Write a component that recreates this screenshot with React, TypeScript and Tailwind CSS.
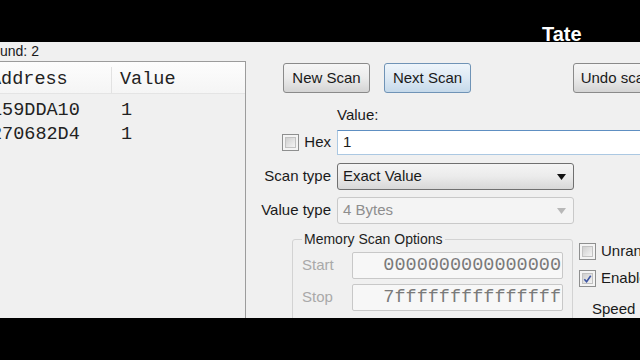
import React from "react";

const MONO = "font-['Liberation_Mono','Courier_New',monospace]";

function Btn({ children, blue, className = "" }: { children: React.ReactNode; blue?: boolean; className?: string }) {
  return (
    <div
      className={`flex h-[30px] w-[87px] shrink-0 items-center justify-center whitespace-nowrap rounded-[3px] border bg-linear-to-b ${
        blue
          ? "border-[#6f93b6] from-[#eef5fb] via-[#dde9f4] to-[#c5d9ea]"
          : "border-[#8a8a8a] from-[#f6f6f6] via-[#ebebeb] to-[#d4d4d4]"
      } ${className}`}
    >
      {children}
    </div>
  );
}

function Check({ checked }: { checked?: boolean }) {
  return (
    <span className="flex h-[17px] w-[17px] shrink-0 border border-[#8e8f8f] bg-[#f4f4f4] p-[2px]">
      <span className="flex h-full w-full items-center justify-center border border-[#c2c2c2] bg-linear-to-br from-[#cfcfcf] to-[#f4f4f4]">
        {checked && (
          <svg width="10" height="10" viewBox="0 0 10 10">
            <path d="M1.5 5.2 L4 8 L8.6 1.4" fill="none" stroke="#3d55a3" strokeWidth="1.8" />
          </svg>
        )}
      </span>
    </span>
  );
}

function Arrow({ color }: { color: string }) {
  return (
    <svg width="9" height="6" viewBox="0 0 9 6" className="shrink-0">
      <polygon points="0,0 9,0 4.5,6" fill={color} />
    </svg>
  );
}

function LeftPane() {
  const rows = [
    ["159DDA10", "1"],
    ["270682D4", "1"],
  ];
  return (
    <div className="flex w-[246px] shrink-0 flex-col overflow-hidden">
      <div className="h-[19px] pt-[1px] text-[14px] leading-[16px]">und: 2</div>
      <div className={`flex-1 border-t border-r border-[#9c9c9c] ${MONO} text-[18.5px] text-[#222]`}>
        <div className="flex h-[32px] items-center border-b border-[#e4e4e4] bg-linear-to-b from-[#fdfdfd] to-[#f5f5f5] pt-[5px]">
          <div className="-ml-[10px] flex h-full w-[122px] shrink-0 items-center border-r border-[#e2e2e2]">Address</div>
          <div className="pl-[8px]">Value</div>
        </div>
        <div className="pt-[5px]">
          {rows.map(([a, v]) => (
            <div key={a} className="flex h-[24px] items-center">
              <div className="-ml-[9px] w-[130px] shrink-0">{a}</div>
              <div>{v}</div>
            </div>
          ))}
        </div>
      </div>
    </div>
  );
}

function RightPane() {
  return (
    <div className="flex min-w-0 flex-1 flex-col overflow-hidden whitespace-nowrap">
      <div className="mt-[21px] flex h-[30px]">
        <Btn className="ml-[37px]">New Scan</Btn>
        <Btn className="ml-[14px]" blue>
          Next Scan
        </Btn>
        <Btn className="ml-[102px]">Undo scan</Btn>
      </div>

      <div className="mt-[13px] h-[17px] pl-[91px] leading-[17px]">Value:</div>

      <div className="mt-[7px] flex h-[25px] items-center">
        <div className="flex w-[91px] shrink-0 items-center justify-end gap-[5px] pr-[6px]">
          <Check />
          <span>Hex</span>
        </div>
        <div className="flex h-[25px] w-[320px] shrink-0 items-center border border-[#abc8e2] border-t-[#5e8fc2] bg-white pl-[5px]">
          1
        </div>
      </div>

      <div className="mt-[8px] flex h-[27px] items-center">
        <div className="w-[91px] shrink-0 pr-[6px] text-right">Scan type</div>
        <div className="flex h-[27px] w-[237px] shrink-0 items-center justify-between rounded-[3px] border border-[#707070] bg-linear-to-b from-[#f5f5f5] via-[#ebebeb] to-[#d8d8d8] pl-[5px] pr-[7px]">
          <span>Exact Value</span>
          <Arrow color="#111" />
        </div>
      </div>

      <div className="mt-[7px] flex h-[27px] items-center">
        <div className="w-[91px] shrink-0 pr-[6px] text-right">Value type</div>
        <div className="flex h-[27px] w-[237px] shrink-0 items-center justify-between rounded-[3px] border border-[#c9c9c9] bg-[#f4f4f4] pl-[5px] pr-[7px] text-[#8e8e8e]">
          <span>4 Bytes</span>
          <Arrow color="#b8b8b8" />
        </div>
      </div>

      <div className="mt-[7px] flex items-start">
        <fieldset className="ml-[46px] h-[100px] w-[281px] shrink-0 rounded-[3px] border border-[#d3d3d3] px-[9px] pt-[5px]">
          <legend className="px-[2px] text-[14px] leading-[16px] text-[#1e1e1e]">Memory Scan Options</legend>
          <div className="flex h-[27px] items-center">
            <span className="w-[50px] shrink-0 text-[#a9a9a9]">Start</span>
            <div className={`flex h-[27px] w-[211px] shrink-0 items-center justify-end rounded-[2px] border border-[#c8c8c8] bg-[#f7f7f7] pr-[1px] ${MONO} text-[18.5px] text-[#7a7a7a]`}>
              0000000000000000
            </div>
          </div>
          <div className="mt-[5px] flex h-[27px] items-center">
            <span className="w-[50px] shrink-0 text-[#a9a9a9]">Stop</span>
            <div className={`flex h-[27px] w-[211px] shrink-0 items-center justify-end rounded-[2px] border border-[#c8c8c8] bg-[#f7f7f7] pr-[1px] ${MONO} text-[18.5px] text-[#7a7a7a]`}>
              7fffffffffffffff
            </div>
          </div>
        </fieldset>
        <div className="ml-[6px] flex shrink-0 flex-col pt-[12px]">
          <div className="flex h-[17px] items-center gap-[5px]">
            <Check />
            <span>Unrandomizer</span>
          </div>
          <div className="mt-[10px] flex h-[17px] items-center gap-[5px]">
            <Check checked />
            <span>Enable Speedhack</span>
          </div>
          <div className="mt-[13px] pl-[13px] leading-[17px]">Speed</div>
        </div>
      </div>
    </div>
  );
}

export default function App() {
  return (
    <div className="relative flex h-[360px] w-[640px] flex-col overflow-hidden bg-black font-['Liberation_Sans',Arial,sans-serif] text-[15px] text-[#1a1a1a]">
      <div className="h-[42px] shrink-0 bg-black" />
      <div className="flex h-[276px] shrink-0 overflow-hidden bg-[#f0f0f0]">
        <LeftPane />
        <RightPane />
      </div>
      <div className="h-[42px] shrink-0 bg-black" />
      <div className="absolute left-[542px] top-[24px] text-[20px] font-bold leading-[20px] text-white">Tate</div>
    </div>
  );
}
